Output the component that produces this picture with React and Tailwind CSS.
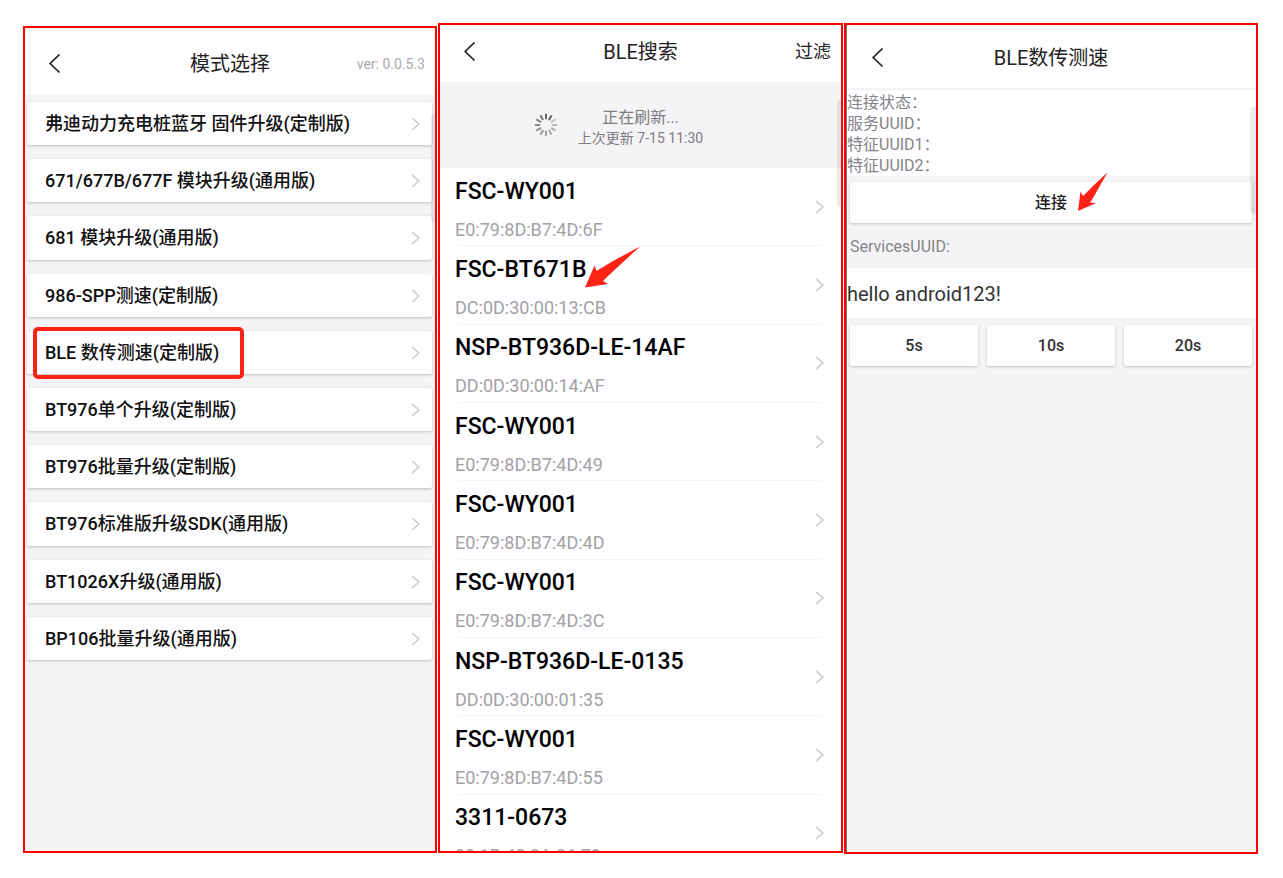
const modes = [
  '弗迪动力充电桩蓝牙 固件升级(定制版)',
  '671/677B/677F 模块升级(通用版)',
  '681 模块升级(通用版)',
  '986-SPP测速(定制版)',
  'BLE 数传测速(定制版)',
  'BT976单个升级(定制版)',
  'BT976批量升级(定制版)',
  'BT976标准版升级SDK(通用版)',
  'BT1026X升级(通用版)',
  'BP106批量升级(通用版)',
]

const devices = [
  { name: 'FSC-WY001', mac: 'E0:79:8D:B7:4D:6F' },
  { name: 'FSC-BT671B', mac: 'DC:0D:30:00:13:CB' },
  { name: 'NSP-BT936D-LE-14AF', mac: 'DD:0D:30:00:14:AF' },
  { name: 'FSC-WY001', mac: 'E0:79:8D:B7:4D:49' },
  { name: 'FSC-WY001', mac: 'E0:79:8D:B7:4D:4D' },
  { name: 'FSC-WY001', mac: 'E0:79:8D:B7:4D:3C' },
  { name: 'NSP-BT936D-LE-0135', mac: 'DD:0D:30:00:01:35' },
  { name: 'FSC-WY001', mac: 'E0:79:8D:B7:4D:55' },
  { name: '3311-0673', mac: '00:1B:43:0A:06:73' },
]

const statusLabels = ['连接状态：', '服务UUID：', '特征UUID1：', '特征UUID2：']

const BackIcon = () => (
  <svg className="w-3 h-5" viewBox="0 0 12 20" fill="none" stroke="#222" strokeWidth="1.7">
    <path d="M10.5 0.5 L1.2 9.5 L10.5 18.5" />
  </svg>
)

const Chevron = () => (
  <svg className="w-[10px] h-4 shrink-0" viewBox="0 0 10 16" fill="none" stroke="#cbcacd" strokeWidth="1.6">
    <path d="M1.2 2 L7.8 8 L1.2 14" />
  </svg>
)

// 12 spokes, fading clockwise
const Spinner = () => (
  <svg className="w-6 h-6" viewBox="0 0 24 24" stroke="#666" strokeWidth="2">
    {Array.from({ length: 12 }, (_, i) => (
      <line
        key={i}
        x1="12"
        y1="0.8"
        x2="12"
        y2="6.2"
        opacity={i < 2 ? 1 : 0.25 + i * 0.055}
        transform={`rotate(${i * 30} 12 12)`}
      />
    ))}
  </svg>
)

const ScrollThumb = ({ className }) => (
  <div className={`absolute right-0 h-[107px] rounded-l bg-black/8 ${className}`} />
)

const ModeScreen = () => (
  <section className="relative mt-[3px] mb-px flex flex-col overflow-hidden border-2 border-[#ff0000] bg-[#f4f3f6]">
    <header className="grid h-[67px] shrink-0 grid-cols-[1fr_auto_1fr] items-center bg-[#fefdff] px-[10px] pt-1 shadow-[inset_0_3px_2px_#f4f3f6]">
      <button type="button" aria-label="返回" className="ml-[14px] justify-self-start">
        <BackIcon />
      </button>
      <h1 className="text-[20px] leading-6 text-[#222]">模式选择</h1>
      <span className="justify-self-end text-[14px] leading-5 text-[#aaa]">ver: 0.0.5.3</span>
    </header>
    <ul className="mt-[7px] grid h-[558px] auto-rows-fr gap-[14px] pr-[3px] pl-[2px]">
      {modes.map((mode, i) => (
        <li key={mode} className="relative">
          <button
            type="button"
            className="flex h-full w-full items-center justify-between rounded-xs bg-[#fefdff] pt-px pr-[11px] pl-[18px] text-left text-[18px] leading-6 font-medium text-[#111] shadow-[0_1px_3px_rgba(0,0,0,0.22)]"
          >
            {mode}
            <Chevron />
          </button>
          {i === 4 && (
            <div className="pointer-events-none absolute -top-1 left-[6px] h-[52px] w-[211px] rounded-[5px] border-4 border-[#ff2316]" />
          )}
        </li>
      ))}
    </ul>
    <ScrollThumb className="top-[86px] w-1" />
  </section>
)

const SearchScreen = () => (
  <section className="relative mb-px flex flex-col overflow-hidden border-2 border-[#ff0000] bg-[#fefdff]">
    <header className="grid h-[57px] shrink-0 grid-cols-[1fr_auto_1fr] items-center px-[10px] pb-1">
      <button type="button" aria-label="返回" className="ml-[14px] justify-self-start">
        <BackIcon />
      </button>
      <h1 className="text-[20px] leading-6 text-[#222]">BLE搜索</h1>
      <button type="button" className="justify-self-end text-[18px] leading-6 text-[#222]">
        过滤
      </button>
    </header>
    <div className="grid h-[86px] shrink-0 grid-cols-[1fr_auto_1fr] items-center bg-[#f4f3f6]">
      <div className="justify-self-end pr-5">
        <Spinner />
      </div>
      <div className="pt-[6px] text-center text-[#7d7c7f]">
        <p className="text-[16px] leading-5">正在刷新...</p>
        <p className="text-[14px] leading-5">上次更新 7-15 11:30</p>
      </div>
    </div>
    <ul className="grid h-[705px] shrink-0 auto-rows-fr pl-[15px]">
      {devices.map((device, i) => (
        <li key={device.mac} className="relative flex flex-col">
          <button type="button" className="flex w-full flex-1 items-center justify-between pr-4 text-left">
            <span className="flex flex-col gap-4 pt-[6px]">
              <span className="text-[23px] leading-6 font-medium text-black">{device.name}</span>
              <span className="text-[18px] leading-5 text-[#a3a2a5]">{device.mac}</span>
            </span>
            <Chevron />
          </button>
          <div className="mr-5 ml-1 h-px bg-[#f3f2f5]" />
          {i === 1 && (
            <svg className="pointer-events-none absolute top-0 left-[130px] h-[42px] w-[55px]" viewBox="0 0 55 42" fill="#ff2316">
              <path d="M55 0.5 L23 30 L18 35 L23 38 L0 41.5 L9.5 19.5 L11.5 25 L28 15 Z" />
            </svg>
          )}
        </li>
      ))}
    </ul>
    <ScrollThumb className="top-[75px] w-1" />
  </section>
)

const SpeedScreen = () => (
  <section className="relative overflow-hidden border-2 border-[#ff0000] bg-[#f4f3f6]">
    <header className="grid h-[65px] grid-cols-[1fr_auto_1fr] items-center border-b-2 border-[#f4f3f6] bg-[#fefdff] px-[10px] pt-[2px]">
      <button type="button" aria-label="返回" className="ml-4 justify-self-start">
        <BackIcon />
      </button>
      <h1 className="text-[20px] leading-6 text-[#222]">BLE数传测速</h1>
    </header>
    <div className="bg-[#fefdff] pt-[2px] pl-px text-[16px] leading-[21px] text-[#858487]">
      {statusLabels.map((label) => (
        <p key={label}>{label}</p>
      ))}
    </div>
    <div className="px-1 pt-[6px]">
      <button
        type="button"
        className="h-[41px] w-full rounded-xs bg-[#fefdff] pt-px text-[16px] leading-6 font-medium text-[#222] shadow-[0_1px_3px_rgba(0,0,0,0.2)]"
      >
        连接
      </button>
      <svg className="pointer-events-none absolute top-[147px] left-[232px] h-10 w-[30px]" viewBox="0 0 30 40" fill="#ff2316">
        <path d="M29.5 0.5 L15 26 L12 30.5 L18 31 L0 39 L2.5 19.5 L5 24 L16 13 Z" />
      </svg>
      <label htmlFor="payload" className="block pt-[14px] pb-[11px] text-[16px] leading-5 text-[#858487]">
        ServicesUUID:
      </label>
    </div>
    <input
      id="payload"
      type="text"
      defaultValue="hello android123!"
      className="block h-[50px] w-full bg-[#fefdff] pt-[2px] pl-px text-[20px] leading-6 text-[#333] outline-none"
    />
    <div className="grid grid-cols-3 gap-[9px] px-1 pt-[7px]">
      {['5s', '10s', '20s'].map((time) => (
        <button
          key={time}
          type="button"
          className="h-[41px] rounded-xs bg-[#fefdff] pt-px text-[16px] leading-6 font-medium text-[#333] shadow-[0_1px_3px_rgba(0,0,0,0.2)]"
        >
          {time}
        </button>
      ))}
    </div>
    <ScrollThumb className="top-[82px] w-[6px]" />
    <div className="absolute inset-y-0 left-0 w-px bg-[#777]" />
  </section>
)

export default function App() {
  return (
    <main className="grid h-screen grid-cols-[414fr_405fr_414fr] grid-rows-1 gap-px bg-white pt-[23px] pr-[25px] pb-6 pl-[23px] font-['Roboto','Noto_Sans_CJK_SC',sans-serif]">
      <ModeScreen />
      <SearchScreen />
      <SpeedScreen />
    </main>
  )
}
